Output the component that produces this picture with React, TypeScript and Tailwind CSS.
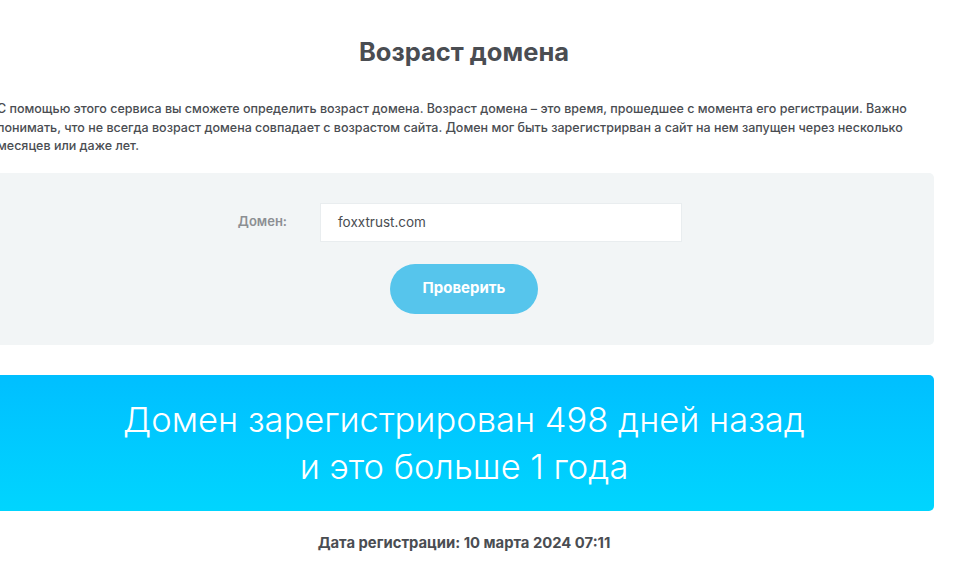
import React from "react";

export default function App() {
  const font = { fontFamily: "Inter, 'Noto Sans', sans-serif" };
  return (
    <div className="min-h-[565px] w-full overflow-hidden bg-white" style={font}>
      <div className="ml-[-6px] w-[940px]">
        <h1 className="pt-[36px] text-center text-[25.5px] font-bold leading-[32px] text-[#4a4d52]">
          Возраст домена
        </h1>
        <p className="mt-[32px] pl-[3px] text-[12.5px] leading-[18.5px] font-medium text-[#4a4d52]">
          С помощью этого сервиса вы сможете определить возраст домена. Возраст домена – это время, прошедшее с момента его регистрации. Важно понимать, что не всегда возраст домена совпадает с возрастом сайта. Домен мог быть зарегистрирван а сайт на нем запущен через несколько месяцев или даже лет.
        </p>
        <div className="mt-[17px] h-[172px] rounded-[5px] bg-[#f2f5f6] pt-[30px]">
          <div className="flex items-center">
            <label className="w-[293px] text-right text-[13px] font-semibold text-[#8c8f93]">Домен:</label>
            <div className="ml-[33px] flex h-[39px] w-[362px] items-center border border-[#e9edef] bg-white pl-[17px] text-[13.5px] text-[#4a4d52]">
              foxxtrust.com
            </div>
          </div>
          <div className="mt-[22px] flex justify-center">
            <button className="h-[50px] w-[148px] rounded-full bg-[#56c5ec] text-[15px] font-bold text-white">
              Проверить
            </button>
          </div>
        </div>
        <div className="mt-[30px] flex h-[136px] flex-col items-center justify-center rounded-[5px] bg-gradient-to-b from-[#00bfff] to-[#00d5fe] text-[34.5px] font-light leading-[47px] text-white">
          <div>Домен зарегистрирован 498 дней назад</div>
          <div>и это больше 1 года</div>
        </div>
        <div className="mt-[21px] text-center text-[14.8px] font-bold text-[#4a4d52]">
          Дата регистрации: 10 марта 2024 07:11
        </div>
      </div>
    </div>
  );
}
